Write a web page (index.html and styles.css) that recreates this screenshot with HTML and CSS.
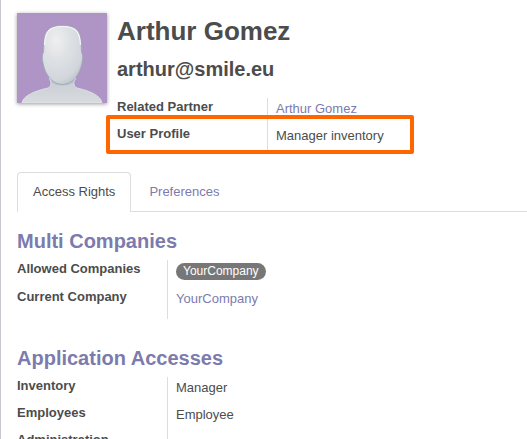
FILE: index.html
```html
<!DOCTYPE html>
<html lang="en">
<head>
<meta charset="utf-8">
<meta name="viewport" content="width=device-width, initial-scale=1">
<title>Arthur Gomez</title>
<link rel="stylesheet" href="styles.css">
</head>
<body>
<main class="sheet">
  <header class="profile">
    <svg class="avatar" viewBox="0 0 90 90" role="img" aria-label="User avatar">
      <defs>
        <radialGradient id="face" cx="0.35" cy="0.25" r="0.85">
          <stop offset="0" stop-color="#efeff0"/>
          <stop offset="0.4" stop-color="#dee1e4"/>
          <stop offset="0.8" stop-color="#d2d6dc"/>
          <stop offset="1" stop-color="#b4bcc5"/>
        </radialGradient>
        <linearGradient id="bust" x1="0" y1="0" x2="0" y2="1">
          <stop offset="0" stop-color="#c6ccd3"/>
          <stop offset="1" stop-color="#d9dcdf"/>
        </linearGradient>
      </defs>
      <rect width="90" height="90" fill="#af95c6"/>
      <path d="M32 65C34.500 69 35 73 31 75C20 77.500 6 82 5 90H85C84 82 71 77.500 60 75C56 73 56 69 59 65Z" fill="url(#bust)" stroke="#e2e5ea" stroke-width="0.800"/>
      <path d="M34 67L35 70Q45 75 56 70L58 67Z" fill="#b9c1ca"/>
      <path d="M45.500 12.500C32 12.500 27.500 18 27 29L26.500 39C25 41 25 46 26 50C28 62 36 71.500 45.500 71.500C55 71.500 63 62 65 50C66 46 66 41 64.500 39L64 29C63.500 18 59 12.500 45.500 12.500Z" fill="url(#face)" stroke="#98a3b0" stroke-width="0.700"/>
      <path d="M27.500 32C28 19 32 13.500 45.500 13.500C59 13.500 63 19 63.500 32" fill="none" stroke="#f4f5f6" stroke-width="1.200"/>
    </svg>
    <div class="identity">
      <h1 class="name">Arthur Gomez</h1>
      <h2 class="email">arthur@smile.eu</h2>
      <dl class="fields">
        <div class="field"><dt>Related Partner</dt><dd><a href="#partner">Arthur Gomez</a></dd></div>
        <div class="field field-highlight"><dt>User Profile</dt><dd>Manager inventory</dd></div>
      </dl>
    </div>
  </header>

  <nav class="tabs">
    <a class="tab tab-active" href="#access">Access Rights</a>
    <a class="tab" href="#preferences">Preferences</a>
  </nav>

  <section class="group" id="access">
    <h2 class="group-title">Multi Companies</h2>
    <dl class="fields fields-roomy">
      <div class="field"><dt>Allowed Companies</dt><dd><span class="tag">YourCompany</span></dd></div>
      <div class="field"><dt>Current Company</dt><dd><a href="#company">YourCompany</a></dd></div>
    </dl>
  </section>

  <section class="group">
    <h2 class="group-title">Application Accesses</h2>
    <dl class="fields">
      <div class="field"><dt>Inventory</dt><dd>Manager</dd></div>
      <div class="field"><dt>Employees</dt><dd>Employee</dd></div>
      <div class="field"><dt>Administration</dt><dd></dd></div>
    </dl>
  </section>
</main>
</body>
</html>
```
FILE: styles.css
```css
* {
  box-sizing: border-box;
}

html {
  overflow: hidden;
}

body {
  margin: 0;
  background: #fff;
  color: #4c4c4c;
  font: 13px/18px "Liberation Sans", Arial, sans-serif;
}

h1, h2, dl, dd {
  margin: 0;
}

a {
  color: #7c7bad;
  text-decoration: none;
}

.sheet {
  min-height: 100vh;
  padding: 13px 0 0 16px;
  border-left: 1px solid #c8c5d3;
}

.profile {
  display: flex;
  align-items: flex-start;
  gap: 10px;
}

.avatar {
  flex: none;
  width: 90px;
  height: 90px;
  box-shadow: 0 1px 4px rgba(0, 0, 0, 0.4);
}

.identity {
  flex: 1;
}

.name {
  font-size: 26px;
  line-height: 36px;
}

.email {
  margin: 6px 0 15px;
  font-size: 20px;
  line-height: 28px;
}

.field {
  position: relative;
  display: grid;
  grid-template-columns: 150px auto;
  width: fit-content;
  min-height: 27px;
}

.field dt {
  font-weight: bold;
}

.field dd {
  padding: 2px 0 0 8px;
  border-left: 1px solid #ddd;
}

.field-highlight::after {
  content: "";
  position: absolute;
  inset: -10px -30px -2px -11px;
  border: 4px solid #f60;
  border-radius: 2px;
}

.fields-roomy .field {
  min-height: 28px;
}

.fields-roomy .field:last-child {
  min-height: 31px;
}

.tag {
  display: inline-block;
  padding: 0 7px;
  border-radius: 9px;
  background: #777;
  color: #fff;
  font-size: 12px;
  line-height: 17px;
}

.tabs {
  display: flex;
  gap: 2px;
  margin-top: 20px;
  border-bottom: 1px solid #ddd;
}

.tab {
  margin-bottom: -1px;
  padding: 9px 15px 10px;
  border: 1px solid transparent;
  border-bottom: 0;
  border-radius: 4px 4px 0 0;
  line-height: 20px;
}

.tab-active {
  border-color: #ddd;
  background: #fff;
  color: #4c4c4c;
}

.group {
  margin-top: 15px;
}

.group + .group {
  margin-top: 25px;
}

.group-title {
  margin-bottom: 5px;
  color: #7c7bad;
  font-size: 20px;
  line-height: 28px;
}
```
